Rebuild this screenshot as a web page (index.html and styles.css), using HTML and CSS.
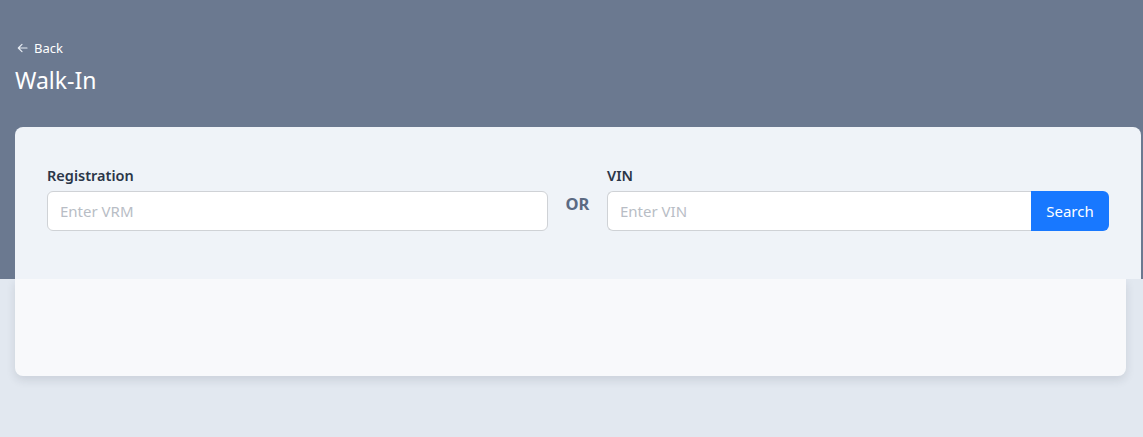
FILE: index.html
```html
<!DOCTYPE html>
<html>
<head>
<meta charset="utf-8">
<link rel="stylesheet" href="styles.css">
</head>
<body>
<header class="hero">
  <a class="back" href="#">
    <svg class="back-icon" width="11" height="10" viewBox="0 0 11 10" fill="none" stroke="currentColor" stroke-width="1.2" stroke-linecap="round" stroke-linejoin="round"><path d="M10 5H1.5M5 1.3L1.3 5L5 8.7"/></svg>
    <span>Back</span>
  </a>
  <h1 class="title">Walk-In</h1>
  <section class="search-card">
    <div class="search-grid">
      <div class="field">
        <label class="label">Registration</label>
        <input class="input" type="text" placeholder="Enter VRM">
      </div>
      <div class="or">OR</div>
      <div class="field">
        <label class="label">VIN</label>
        <div class="input-group">
          <input class="input input-joined" type="text" placeholder="Enter VIN">
          <button class="btn">Search</button>
        </div>
      </div>
    </div>
  </section>
</header>
<section class="results-card"></section>
</body>
</html>
```

FILE: styles.css
```css
* { box-sizing: border-box; }
html, body { margin: 0; padding: 0; }
body {
  background: #e2e8f0;
  font-family: "Noto Sans", "Open Sans", sans-serif;
  height: 437px;
  overflow: hidden;
}
.hero {
  background: #6b7990;
  height: 279px;
  padding: 40px 2px 0 15px;
  display: flex;
  flex-direction: column;
}
.back {
  display: flex;
  align-items: center;
  gap: 6px;
  color: #ffffff;
  text-decoration: none;
  font-size: 13px;
  line-height: 16px;
  padding-left: 2px;
}
.back-icon { color: #e6ebf2; }
.title {
  margin: 8px 0 0 0;
  color: #ffffff;
  font-weight: 400;
  font-size: 23px;
  line-height: 32px;
}
.search-card {
  margin-top: 31px;
  background: #eff3f8;
  border-radius: 8px 8px 0 0;
  padding: 38px 32px 0 32px;
  flex: 1;
}
.search-grid {
  display: grid;
  grid-template-columns: 501px 59px 1fr;
  align-items: end;
}
.field { display: flex; flex-direction: column; }
.label {
  font-size: 14.5px;
  font-weight: 600;
  color: #2b3648;
  line-height: 20px;
  margin-bottom: 6px;
}
.input {
  height: 40px;
  border: 1px solid #cfd2d6;
  border-radius: 6px;
  background: #ffffff;
  padding: 0 12px;
  font-family: inherit;
  font-size: 15px;
  color: #333;
  outline: none;
  width: 100%;
}
.input::placeholder { color: #b8bdc5; }
.or {
  text-align: center;
  font-weight: 700;
  font-size: 16.5px;
  color: #5b6a82;
  height: 40px;
  line-height: 25px;
}
.input-group { display: flex; }
.input-joined {
  border-radius: 6px 0 0 6px;
  border-right: none;
  flex: 1;
}
.btn {
  width: 78px;
  height: 40px;
  border: none;
  border-radius: 0 6px 6px 0;
  background: #1878ff;
  color: #ffffff;
  font-family: inherit;
  font-size: 15px;
  padding: 0;
}
.results-card {
  margin: 0 17px 0 15px;
  height: 97px;
  background: #f8f9fb;
  border-radius: 0 0 8px 8px;
  box-shadow: 0 4px 10px rgba(30, 41, 59, 0.12);
}
```
